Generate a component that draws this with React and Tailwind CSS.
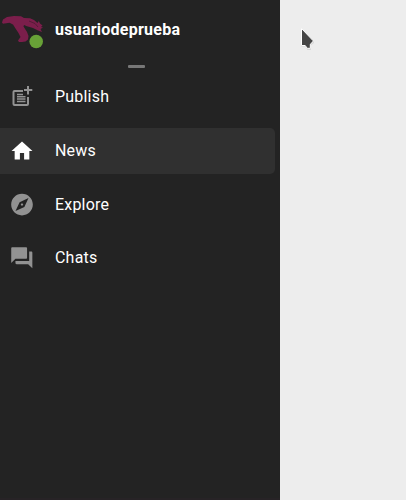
import { MdHome, MdExplore, MdQuestionAnswer } from "react-icons/md";

function PublishIcon({ className }) {
  return (
    <svg className={className} viewBox="0 0 26 26" fill="none" stroke="currentColor">
      <path d="M14 7H5.5Q4.5 7 4.5 8V20Q4.5 21 5.5 21H18Q19 21 19 20V13" strokeWidth="2" />
      <path d="M19 2V10.5M15 6H23.3" strokeWidth="2" />
      <path d="M8 10.5H14M8 12.8H16.5M8 15.1H16.5M8 17.4H16.5" strokeWidth="1.5" />
    </svg>
  );
}

const items = [
  { label: "Publish", Icon: PublishIcon, viewBox: "0 0 26 26" },
  { label: "News", Icon: MdHome, viewBox: "-0.4 -0.4 24.8 24.8", active: true },
  { label: "Explore", Icon: MdExplore, viewBox: "0 0.4 24 24" },
  { label: "Chats", Icon: MdQuestionAnswer, viewBox: "-0.1 -0.1 24.6 24.6" },
];

function Avatar() {
  return (
    <svg className="block h-[60px] w-[50px]" viewBox="0 0 50 60">
      <path
        d="M2 22.5L3 19.5L7 17L14 16L21 16.2L24 18L30 18.3L34 20L37.5 23L38.8 21L40 23.5L42.5 25.5L41 27L43 27.5L40.5 29L42 32L38 30.5L33 28L27 26.3L24 25L23.5 26.5L27 32L28.5 36L28 39.5L25.5 41.5L22 42H19L18 40.5L20.5 37L18.5 33L15.5 28.5L13 24.5L9.5 22.8L3 23.8Z"
        fill="#7b1e4b"
      />
      <path d="M29 21L35 23.5L38 27" fill="none" stroke="#431a2e" strokeWidth=".7" />
      <circle cx="36.2" cy="41.5" r="6.8" fill="#68a137" />
    </svg>
  );
}

function Cursor() {
  return (
    <svg className="absolute left-[299px] top-[26px] h-[26px] w-[18px]" viewBox="0 0 18 26">
      <path d="M2.5 3V20.5H7L8.3 24H12V19.2L15 17V15Z" fill="#b9b9b9" opacity=".4" />
      <path d="M2.5 2.5V19.5H6.2L8.3 22.3H11.3V18.2L14 15.6V14.6Z" fill="#464646" stroke="#fff" strokeWidth="1" />
    </svg>
  );
}

export default function App() {
  return (
    <div className="relative flex h-[500px] w-[406px] overflow-hidden bg-[#ededed] font-['Roboto',sans-serif] text-white">
      <aside className="flex w-[280px] flex-col border-b-2 border-[#272326] bg-[#232323]">
        <header className="flex h-[60px] items-center">
          <Avatar />
          <span className="ml-[5px] text-base font-bold tracking-[0.25px]">usuariodeprueba</span>
        </header>
        <div className="ml-32 mt-[5px] h-[3px] w-[17px] rounded-[1px] bg-[#777777]" />
        <nav className="mt-[6px] flex flex-col gap-[7.8px]">
          {items.map(({ label, Icon, viewBox, active }) => (
            <a
              key={label}
              className={
                active
                  ? "flex h-[46px] w-[275px] items-center rounded-r-[5px] bg-[#303030] pl-[9px] text-white"
                  : "flex h-[46px] w-[275px] items-center pl-[9px] text-[#929292]"
              }
            >
              <Icon className="size-[26px]" viewBox={viewBox} />
              <span className="ml-5 text-base tracking-[0.2px] text-white">{label}</span>
            </a>
          ))}
        </nav>
      </aside>
      <Cursor />
    </div>
  );
}
